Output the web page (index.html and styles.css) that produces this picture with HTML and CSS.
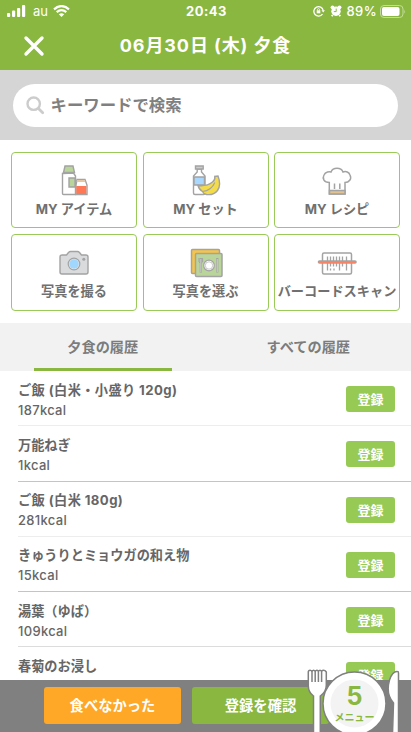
FILE: index.html
```
<!DOCTYPE html>
<html lang="ja">
<head>
<meta charset="utf-8">
<title>夕食</title>
<link rel="stylesheet" href="styles.css">
</head>
<body>
<header class="header">
  <div class="status">
    <div class="status-left">
      <svg width="19" height="12" viewBox="0 0 19 12" fill="#fff"><rect x="0" y="8" width="3.2" height="4" rx="1"/><rect x="5" y="5.5" width="3.2" height="6.5" rx="1"/><rect x="10" y="3" width="3.2" height="9" rx="1"/><rect x="15" y="0" width="3.2" height="12" rx="1"/></svg>
      <span class="carrier">au</span>
      <svg width="17" height="12" viewBox="0 0 17 12" fill="none" stroke="#fff" stroke-width="2.2"><path d="M1 4.3Q8.500-2.200 16 4.300M3.700 7.200Q8.500 3 13.300 7.200"/><path d="M5.800 9.200Q8.500 7.200 11.200 9.200L8.500 12Z" fill="#fff" stroke="none"/></svg>
    </div>
    <span class="time">20:43</span>
    <div class="status-right">
      <svg width="12" height="12" viewBox="0 0 12 12" fill="none" stroke="#fff" stroke-width="1.300"><path d="M9.500 9A4.700 4.700 0 1 1 10.200 5.500"/><path d="M8.500 5.300h3.400l-1.700 2.200z" fill="#fff" stroke="none"/><path d="M3.700 5.300h3.600v3H3.700z" fill="#fff" stroke="none"/><path d="M4.500 5.500V4.600a1 1 0 0 1 2 0v.9" stroke-width=".8"/></svg>
      <svg class="alarm" width="12" height="12" viewBox="0 0 12 12"><g fill="#fff"><circle cx="2.500" cy="2.300" r="1.900"/><circle cx="9.500" cy="2.300" r="1.900"/><circle cx="6" cy="6.300" r="4.700"/><path d="M2 9.500l1.500 1-1 1.200-1.500-1zM10 9.500l-1.500 1 1 1.200 1.500-1z"/></g><path d="M6.200 3.600v3H3.800" fill="none" stroke="#8ab740" stroke-width="1"/></svg>
      <span class="percent">89%</span>
      <svg width="26" height="13" viewBox="0 0 26 13"><rect x=".5" y=".5" width="22.500" height="12" rx="3.500" fill="none" stroke="#c4db9f"/><rect x="2" y="2" width="17.500" height="9" rx="2" fill="#fff"/><path d="M24.300 4.500q1.500 2 0 4z" fill="#c4db9f"/></svg>
    </div>
  </div>
  <div class="titlebar">
    <svg class="close" width="22" height="22" viewBox="0 0 22 22"><path d="M3 3l16 16M19 3L3 19" stroke="#fff" stroke-width="3.400" stroke-linecap="round"/></svg>
    <h1 class="title">06月30日 (木) 夕食</h1>
  </div>
</header>
<div class="search">
  <div class="pill">
    <svg width="19" height="19" viewBox="0 0 19 19" fill="none" stroke="#ccc" stroke-linecap="round"><circle cx="7.700" cy="7.700" r="6.200" stroke-width="2.400"/><path d="M12.700 12.700l4 4" stroke-width="2.800"/></svg>
    <span class="placeholder">キーワードで検索</span>
  </div>
</div>
<main>
<section class="cards">
  <div class="card">
    <svg class="icon" viewBox="0 0 42 32" fill="#fff" stroke="#a3a3a3" stroke-width="1.400"><path d="M9.500 8.500v20q0 1 1 1h12V11l-2-3z"/><path d="M10.500 7.500L12 1h8l1.500 6.500z" fill="#bad59a"/><path d="M16 13h6v9h-6z" fill="#bad59a"/><path d="M23 20l1-5.500h8l2 5.500v9.500H23z"/><path d="M24.500 15h7l1 2h-9z" fill="#e6c9a3" stroke="none"/><path d="M23.300 21h10v8h-10z" fill="#ff7956" stroke="none"/></svg>
    <span class="label">MY アイテム</span>
  </div>
  <div class="card">
    <svg class="icon" viewBox="0 0 42 32" fill="#fff" stroke="#a3a3a3" stroke-width="1.400"><path d="M12.200 4v3L8.500 11v17q0 1.500 1.500 1.500h8.500q1.500 0 1.500-1.500V11l-3.500-4V4z"/><path d="M10.500 1h7.700v3h-7.700z" fill="#ccc"/><path d="M9 12h10.500v8H9z" fill="#a8d7ff"/><path d="M13 20.500Q22 21.500 27.500 17Q30.500 14.500 29.800 11.300L33 11Q36.500 20 32.500 25.500Q28.500 30.500 21.500 29.500Q18.500 29 17.500 26.500Q14 24.500 13 20.500Z" fill="#f3dc47"/><path d="M17.500 26.500Q26.500 25.500 29.800 17.500" fill="none" stroke-width="1.200"/></svg>
    <span class="label">MY セット</span>
  </div>
  <div class="card">
    <svg class="icon" viewBox="0 0 42 32" fill="#fff" stroke="#a3a3a3" stroke-width="1.500"><path d="M13.300 29V17.500C8 17.500 6 13.500 8 10c1.500-3.500 5.500-3.500 7-3 2-5 10-5 12 0 3-1 6 0 7 3 2 4-1 7.500-5 7.500v11.500z"/><path d="M13.500 25.500h15.500v3.500H13.500z" fill="#e2c28e"/><path d="M18.500 18.500v5.500M23.800 18.500v5.500"/></svg>
    <span class="label">MY レシピ</span>
  </div>
  <div class="card">
    <svg class="icon" viewBox="0 0 42 32" fill="#d9dbdc" stroke="#a3a3a3" stroke-width="1.400"><path d="M9 8h4.500l2-2.500q1-1 2-1h7q1 0 2 1l2 2.500H33q2 0 2 2v15q0 2-2 2H9q-2 0-2-2V10q0-2 2-2z"/><circle cx="21" cy="17" r="5.800" fill="#e8e8e8" stroke-width="1.200"/><circle cx="21" cy="17" r="4.700" fill="#a0d7ff" stroke="none"/><circle cx="30.800" cy="12.200" r="1.500" fill="#a3a3a3" stroke="none"/></svg>
    <span class="label">写真を撮る</span>
  </div>
  <div class="card">
    <svg class="icon" viewBox="0 0 42 32" fill="none" stroke="#a3a3a3" stroke-width="1.500"><rect x="6.500" y="2.500" width="28" height="24" rx="1" fill="#f8c445"/><rect x="10.500" y="6.500" width="26.500" height="23" rx="1" fill="#bad59a"/><circle cx="24" cy="18.500" r="5.300" fill="#fff" stroke-width="1.200"/><circle cx="24" cy="18.500" r="3.700" stroke-width=".6"/><path d="M15.800 11v14.500M32.300 11v14.500" stroke-width="2.200"/><path d="M14 11v4q1.800 3 3.600 0v-4" stroke-width="1"/><path d="M15.800 12v13M32.300 12v13" stroke="#ddd" stroke-width=".7"/></svg>
    <span class="label">写真を選ぶ</span>
  </div>
  <div class="card">
    <svg class="icon" viewBox="0 0 42 32" fill="none" stroke="#a3a3a3" stroke-width="1.500"><rect x="6.500" y="6" width="29" height="21" rx="1.500" fill="#fff"/><path d="M11.500 9.500v14M14.500 9.500v10M17.500 9.500v10M20.500 9.500v10M23.500 9.500v10M26.500 9.500v10M30.500 9.500v14M14.500 21.500v2M18 21.500v2M23.500 19v4.500" stroke-width="1.300"/><path d="M3.500 15h35.500" stroke-width="3.600" stroke-linecap="round"/><path d="M3.500 15h35.500" stroke="#f98465" stroke-width="2.200" stroke-linecap="round"/></svg>
    <span class="label">バーコードスキャン</span>
  </div>
</section>
<nav class="tabs"><div class="tab"><span class="tab-label active">夕食の履歴</span></div><div class="tab"><span class="tab-label">すべての履歴</span></div></nav>
<ul class="list">
  <li class="row"><div class="info"><b class="name mixed">ご飯 (白米・小盛り 120g)</b><span class="kcal">187kcal</span></div><button class="add">登録</button></li>
  <li class="row dark"><div class="info"><b class="name">万能ねぎ</b><span class="kcal">1kcal</span></div><button class="add">登録</button></li>
  <li class="row"><div class="info"><b class="name mixed">ご飯 (白米 180g)</b><span class="kcal">281kcal</span></div><button class="add">登録</button></li>
  <li class="row dark"><div class="info"><b class="name">きゅうりとミョウガの和え物</b><span class="kcal">15kcal</span></div><button class="add">登録</button></li>
  <li class="row mid"><div class="info"><b class="name">湯葉（ゆば）</b><span class="kcal">109kcal</span></div><button class="add">登録</button></li>
  <li class="row"><div class="info"><b class="name">春菊のお浸し</b></div><button class="add">登録</button></li>
</ul>
</main>
<footer class="footer">
  <button class="action skip">食べなかった</button>
  <button class="action confirm">登録を確認</button>
  <div class="plate">
    <svg width="104" height="64" viewBox="0 0 104 64" fill="#fff" stroke="#808080" stroke-width="1.500"><path d="M6.500 66V28Q1 24 1.300 17V4q0-1.800 1.800-1.800T5 4v10V4q0-1.800 1.600-1.800T8.200 4v10V4q0-1.800 1.600-1.800T11.400 4v10V4q0-1.800 1.600-1.800T14.600 4v10V4q0-1.800 1.800-1.800T19.300 4v13q0 7-6 11v38z"/><path d="M85.500 66l1-31q-8-9-4-23 3-9 8-8.500 1 0 1 1.500V66z"/><circle cx="47.500" cy="35.500" r="31.500"/><circle cx="47.500" cy="35.500" r="24" fill="#f3f3f3" stroke="none"/></svg>
    <div class="count"><b class="number">5</b><span class="menu">メニュー</span></div>
  </div>
</footer>
</body>
</html>
```
FILE: styles.css
```
* { box-sizing: border-box; }
body { margin: 0; width: 411px; height: 732px; overflow: hidden; position: relative; background: #fff; color: #666; font-family: Inter, "Noto Sans CJK JP", sans-serif; }
svg { display: block; flex: none; }
button { border: 0; padding: 0; font-family: inherit; font-weight: 700; color: #fff; white-space: nowrap; }
.header { height: 70px; background: #8ab740; color: #fff; }
.status { height: 22px; display: grid; grid-template-columns: 1fr auto 1fr; align-items: center; padding: 0 5px 0 7px; font-size: 13px; line-height: 16px; }
.status-left, .status-right { display: flex; align-items: center; }
.status-right { justify-content: flex-end; }
.carrier { margin: 0 5px 0 7px; }
.time { font-weight: 700; letter-spacing: .5px; }
.alarm { margin-left: 5px; }
.percent { margin: 0 3px 0 5px; font-weight: 500; letter-spacing: .4px; }
.titlebar { height: 47px; display: grid; grid-template-columns: 60px 1fr 60px; align-items: center; }
.close { margin-left: 23px; }
.title { margin: 0; font-size: 18px; line-height: 24px; letter-spacing: .9px; text-align: center; white-space: nowrap; }
.search { height: 70px; padding: 13.500px 13px 0; background: #d5d5d5; }
.pill { height: 43.500px; border-radius: 22px; background: #fff; display: flex; align-items: center; padding-left: 13px; gap: 5.500px; }
.placeholder { font-size: 16.400px; font-weight: 700; color: #808080; line-height: 24px; }
.cards { height: 183px; padding: 11.500px 11px 0; display: grid; grid-template-columns: repeat(3, 126px); grid-template-rows: 76.500px 76.500px; gap: 6px 5.500px; align-content: start; }
.card { border: 1.500px solid #9aca59; border-radius: 4px; display: flex; flex-direction: column; align-items: center; padding-top: 12px; }
.icon { width: 42px; height: 32px; }
.label { font-size: 13.200px; font-weight: 700; line-height: 20px; margin-top: 2px; color: #707070; white-space: nowrap; }
.tabs { height: 48px; background: #f2f2f2; display: grid; grid-template-columns: 1fr 1fr; }
.tab { padding: 0 34px; display: flex; }
.tab-label { flex: 1; height: 48px; line-height: 47px; text-align: center; font-size: 14.200px; font-weight: 700; color: #7c7c7c; border-bottom: 3px solid transparent; }
.active { border-color: #8ab740; }
.list { list-style: none; margin: 0; padding: 0 0 0 18px; }
.row { height: 55.300px; border-bottom: 1px solid #ededed; display: flex; justify-content: space-between; padding: 8.500px 16px 0 0; }
.dark { border-color: #c4c4c4; }
.mid { border-color: #dcdcdc; }
.info { display: flex; flex-direction: column; }
.name { font-size: 13.200px; line-height: 20px; }
.mixed { letter-spacing: .4px; }
.kcal { font-size: 13px; font-weight: 500; line-height: 20px; letter-spacing: .3px; }
.add { width: 49px; height: 26px; margin-top: 6.500px; border-radius: 3px; background: #96ca55; font-size: 13px; line-height: 26px; }
.footer { position: absolute; left: 0; right: 0; bottom: 0; height: 52.500px; background: #808080; padding: 7.500px 0 0 44px; display: flex; gap: 11px; align-items: flex-start; }
.action { width: 137px; height: 37px; border-radius: 3px; font-size: 14.300px; line-height: 37px; }
.skip { background: #ffa726; }
.confirm { background: #8ab740; }
.plate { position: absolute; left: 307px; bottom: 0; width: 104px; height: 64px; }
.count { position: absolute; left: 17px; top: 14px; width: 61px; display: flex; flex-direction: column; align-items: center; color: #8ab740; }
.number { font-size: 25px; line-height: 28px; }
.menu { font-size: 10px; line-height: 14px; font-weight: 700; }
```
